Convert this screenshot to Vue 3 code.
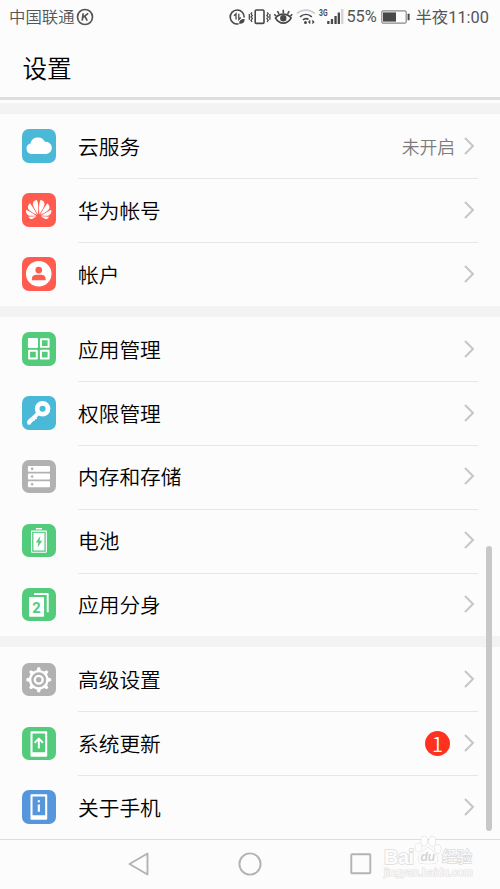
<template>
  <div class="phone">
    <div class="status-bar">
      <span class="carrier">中国联通</span>
      <svg class="k-mark" width="18" height="18" viewBox="0 0 18 18">
        <circle cx="9" cy="9" r="7.5" />
        <path d="M7.2 5.4 6.2 12.6M12.2 5.4 7 9.4M8.8 8.2l2.4 4.4" />
      </svg>
      <div class="status-icons">
        <svg width="132" height="34" viewBox="0 0 132 34">
          <g class="line">
            <path d="M15.200 17.500A7 7 0 1 0 9.500 23.900" />
            <path class="slim" d="M7 19.500v-5.800l-2 2M9.800 13.700v5.800l2-2" />
            <path class="dark slim" d="M10.800 23.200c0-2.400 1.400-3.500 4.200-3.600 0 2.400-1.500 3.600-4.200 3.600z" />
          </g>
          <g class="line">
            <rect x="26.200" y="10" width="8.800" height="13.400" rx="1.200" />
            <path class="slim" d="M23 12.300l-1 1.500 1.300 1.600-1.300 1.600 1.300 1.600-1.300 1.600 1 1.600M20.300 14v5.800M38.200 12.300l1 1.500-1.300 1.600 1.300 1.600-1.300 1.600 1.300 1.600-1 1.600M40.900 14v5.800" />
          </g>
          <g class="line">
            <path d="M46.500 18c4-5.200 11.600-5.200 15.600 0-4 6.800-11.600 6.800-15.600 0z" />
            <circle class="dark" cx="54.300" cy="18.300" r="2.400" />
            <path d="M54.300 13V9.800M50 13.800l-1.600-2.600M58.600 13.800l1.600-2.600M47 16l-1.700-1.800M61.500 16l1.800-1.800" />
          </g>
          <g class="line">
            <path class="faint" d="M68 13.600c5-4.600 12.700-4.600 17.700 0" />
            <path d="M71 16.800c3.600-3.100 8.300-3.100 11.800 0M73.900 19.900c1.500-1.300 4-1.500 5.600-.4" />
            <circle class="dark" cx="76.500" cy="22.400" r=".7" />
            <path class="slim" d="M81.300 20.500l-1.400 1.500 1.400 1.500M83.300 20.500l1.400 1.500-1.400 1.500" />
          </g>
          <text class="net" x="90" y="16" textLength="8.500" lengthAdjust="spacingAndGlyphs">3G</text>
          <g class="bars">
            <rect x="98.200" y="21" width="2.300" height="3" />
            <rect x="101.800" y="19" width="2.300" height="5" />
            <rect x="105.400" y="16" width="2.300" height="8" />
            <rect x="108.700" y="12.500" width="2.300" height="11.500" />
            <rect class="off" x="112.100" y="9" width="2.300" height="15" />
          </g>
        </svg>
      </div>
      <span class="percent">55%</span>
      <svg class="battery" width="29" height="14" viewBox="0 0 29 14">
        <rect class="shell" x=".8" y=".8" width="24.400" height="12.400" rx="1.500" />
        <rect x="2" y="2.400" width="13" height="9.200" />
        <rect x="26.600" y="3.700" width="2" height="6.600" rx=".5" />
      </svg>
      <span class="clock">半夜11:00</span>
    </div>

    <header class="title">设置</header>

    <main class="settings">
      <section v-for="(group, g) in groups" :key="g" class="group">
        <div v-for="item in group" :key="item.label" class="row">
          <svg class="icon" :class="item.color" viewBox="0 0 34 34">
            <path v-if="item.icon === 'cloud'" class="fill" d="M9.500 25.300a5.400 5.400 0 0 1-.9-10.600A7.800 7.800 0 0 1 23.200 13a6.200 6.200 0 0 1 1.800 12.300z" />

            <template v-else-if="item.icon === 'huawei'">
              <path class="fill" transform="translate(4.100 3.900) scale(1.070)" :d="petals" />
              <path class="fill" transform="translate(29.800 3.900) scale(-1.070 1.070)" :d="petals" />
            </template>

            <template v-else-if="item.icon === 'user'">
              <circle class="fill" cx="17" cy="17" r="13" />
              <circle class="tint" cx="17" cy="13.300" r="3.400" />
              <path class="tint" d="M10 23.500v-1.400c0-2.700 2-4 4.500-4h5c2.500 0 4.500 1.300 4.500 4v1.400z" />
            </template>

            <template v-else-if="item.icon === 'apps'">
              <rect class="fill" x="6" y="6" width="10.200" height="10.200" rx="1" />
              <path class="stroke" d="M19.200 7.300h7.800v7.800h-7.800zM7.200 19.100H15v7.800H7.200zM19.200 19.100h7.800v7.800h-7.800z" />
            </template>

            <template v-else-if="item.icon === 'key'">
              <circle class="stroke ring" cx="20.900" cy="12.900" r="5.500" />
              <path class="stroke shaft" d="M16.800 17.200 7.500 26.400" />
              <path class="fill" d="M5 26 8.500 22l6-1 .8 2.300-2 .2-.4 1.700-2-.1-.8 1.900-1 .6-.3 1.300-3.100.2z" />
            </template>

            <template v-else-if="item.icon === 'storage'">
              <template v-for="y in [6, 13.800, 21.600]" :key="y">
                <rect class="fill" x="6" :y="y" width="22.400" height="6" rx=".8" />
                <circle class="tint" cx="10.300" :cy="y + 3" r="1.300" />
              </template>
            </template>

            <template v-else-if="item.icon === 'battery'">
              <rect class="fill" x="14" y="4" width="6.400" height="1.600" rx=".4" />
              <rect class="stroke thin" x="9.700" y="7.200" width="15" height="21.500" rx=".5" />
              <rect class="fill" x="11.600" y="9" width="11.200" height="17.900" />
              <path class="tint" d="M18.600 12.300 14 18.900h2.700L15.900 23.800l4.600-6.700h-2.700z" />
            </template>

            <template v-else-if="item.icon === 'clone'">
              <path class="stroke" d="M12.300 6h13.800v18.500" />
              <rect class="fill" x="7.200" y="9.200" width="15.200" height="20" rx=".8" />
              <text class="two" x="14.800" y="24.900">2</text>
            </template>

            <template v-else-if="item.icon === 'gear'">
              <circle class="stroke heavy" cx="17" cy="17" r="8.800" />
              <circle class="stroke heavy" cx="17" cy="17" r="4" />
              <path v-for="n in 8" :key="n" class="fill" d="M14.500 8.300 15.800 4.400h2.400l1.300 3.900z" :transform="`rotate(${n * 45} 17 17)`" />
            </template>

            <template v-else>
              <path class="fill" fill-rule="evenodd" d="M9.500 4.300h15.200q.9 0 .9.900v24q0 .9-.9.900H9.500q-.9 0-.9-.9v-24q0-.9.900-.9zM10.700 6.500v19.200h12.800V6.500z" />
              <path v-if="item.icon === 'update'" class="stroke" d="M17.100 21.700V12M12.900 16l4.200-4.200 4.200 4.200" />
              <path v-else class="stroke info" d="M17.100 14.800v7.300M17.100 10.500v2" />
            </template>
          </svg>

          <div class="row-body">
            <span class="label">{{ item.label }}</span>
            <span v-if="item.value" class="value">{{ item.value }}</span>
            <span v-if="item.badge" class="badge">{{ item.badge }}</span>
            <svg class="chevron" width="12" height="20" viewBox="0 0 12 20">
              <path d="M2 2l8 8-8 8" />
            </svg>
          </div>
        </div>
      </section>
      <div class="scrollbar"></div>
    </main>

    <nav class="nav-bar">
      <svg width="24" height="26" viewBox="0 0 24 26"><path d="M20.500 2.500v21L2.500 13z" /></svg>
      <svg width="24" height="26" viewBox="0 0 24 26"><circle cx="12" cy="13" r="10.600" /></svg>
      <svg width="24" height="26" viewBox="0 0 24 26"><rect x="2.300" y="3.300" width="19" height="19" rx=".8" /></svg>
    </nav>

    <div class="watermark">
      <div class="brand">
        <span class="bai">Bai</span>
        <svg class="paw" width="28" height="31" viewBox="0 0 28 31">
          <ellipse cx="4.500" cy="12.500" rx="3.200" ry="4.200" />
          <ellipse cx="10.300" cy="6" rx="3.200" ry="4.800" />
          <ellipse cx="18.300" cy="6.200" rx="3.200" ry="4.800" />
          <ellipse cx="23.800" cy="14" rx="3" ry="4.300" />
          <path d="M14 13c3.500 0 5 4 7.500 6.300 3.500 3.300 3 8.700-2 9.200-3.500.3-7.500.3-11 0-5-.5-5.500-6-2-9.200C9 17 10.500 13 14 13z" />
          <text x="6.500" y="26.300">du</text>
        </svg>
        <span class="jy">经验</span>
      </div>
      <div class="site">jingyan.baidu.com</div>
    </div>
  </div>
</template>

<script setup>
// left half of the flower, drawn twice with the second copy mirrored
const petals =
  'M3.670 6.140S1.820 7.910 1.720 9.780v.35c.08 1.510 1.220 2.400 1.220 2.400 1.830 1.790 6.260 4.040 7.300 4.550 0 0 .06.03.1-.01l.02-.04v-.04C7.520 10.800 3.670 6.140 3.670 6.140zM9.650 18.600c-.02-.08-.1-.08-.1-.08l-7.380.26c.8 1.430 2.150 2.530 3.560 2.200.96-.25 3.160-1.780 3.880-2.300.06-.05.04-.09.04-.09zM9.730 17.820C6.490 15.630.21 12.280.21 12.280c-.15.46-.2.9-.21 1.300v.07c0 1.070.4 1.820.4 1.820.8 1.690 2.340 2.200 2.340 2.200.7.3 1.400.31 1.400.31.12.02 4.400 0 5.540 0 .05 0 .08-.05.08-.05v-.06c0-.03-.03-.05-.03-.05zM9.060 3.190a3.420 3.420 0 0 0-2.570 3.150v.41c.03.6.16 1.050.16 1.050.66 2.900 3.860 7.650 4.550 8.650.05.05.1.03.1.03a.1.1 0 0 0 .06-.1c1.060-10.600-1.110-13.420-1.110-13.420-.32.02-1.190.23-1.190.23z';

const groups = [
  [
    { label: '云服务', icon: 'cloud', color: 'blue', value: '未开启' },
    { label: '华为帐号', icon: 'huawei', color: 'red' },
    { label: '帐户', icon: 'user', color: 'red' },
  ],
  [
    { label: '应用管理', icon: 'apps', color: 'green' },
    { label: '权限管理', icon: 'key', color: 'blue' },
    { label: '内存和存储', icon: 'storage', color: 'gray' },
    { label: '电池', icon: 'battery', color: 'green' },
    { label: '应用分身', icon: 'clone', color: 'green' },
  ],
  [
    { label: '高级设置', icon: 'gear', color: 'gray' },
    { label: '系统更新', icon: 'update', color: 'green', badge: 1 },
    { label: '关于手机', icon: 'about', color: 'indigo' },
  ],
];
</script>

<style>
body {
  margin: 0;
}
</style>

<style scoped>
.phone {
  position: relative;
  display: flex;
  flex-direction: column;
  width: 500px;
  height: 889px;
  overflow: hidden;
  background: #fcfcfc;
  color: #000;
  font-family: 'Noto Sans CJK SC', sans-serif;
  font-weight: 350;
}

.status-bar {
  display: flex;
  align-items: center;
  height: 34px;
  padding: 0 11px 0 9px;
  color: #555;
  font-family: Roboto, 'Noto Sans CJK SC', sans-serif;
  font-size: 16.400px;
  font-weight: 400;
  line-height: 34px;
  white-space: nowrap;
}

.carrier,
.clock {
  position: relative;
  top: 1px;
}

.carrier {
  font-weight: 350;
}

.k-mark {
  margin-left: 1px;
  fill: none;
  stroke: #555;
  stroke-width: 1.700;
}

.status-icons {
  width: 117px;
  height: 34px;
  margin-left: auto;
}

.line {
  fill: none;
  stroke: #484848;
  stroke-width: 1.600;
}

.line .slim {
  stroke-width: 1.300;
}

.line .dark {
  fill: #484848;
}

.line .faint {
  stroke: #ccc;
}

.net {
  fill: #484848;
  font: bold 9.500px Roboto, sans-serif;
}

.bars {
  fill: #484848;
}

.bars .off {
  fill: #d4d4d4;
}

.percent {
  width: 35px;
}

.battery {
  flex-shrink: 0;
  fill: #484848;
}

.battery .shell {
  fill: none;
  stroke: #888;
  stroke-width: 1.200;
}

.clock {
  margin-left: 5px;
}

.title {
  height: 63px;
  padding-left: 22.500px;
  border-bottom: 3px solid #dedede;
  font-size: 24.600px;
  line-height: 66px;
}

.settings {
  position: relative;
  padding-top: 3px;
}

.group {
  border-top: 11px solid #f3f3f3;
}

.row {
  display: flex;
  align-items: center;
  height: 64px;
  padding: 0 22px;
}

.group + .group .row {
  height: 63.900px;
}

.icon {
  flex-shrink: 0;
  width: 33.500px;
  height: 33.500px;
  border-radius: 7px;
}

.blue {
  background: #49b9d7;
  --tint: #49b9d7;
}

.red {
  background: #ff5b4f;
  --tint: #ff5b4f;
}

.green {
  background: #52cb7b;
  --tint: #52cb7b;
}

.gray {
  background: #b1b1b1;
  --tint: #b1b1b1;
}

.indigo {
  background: #5596dc;
  --tint: #5596dc;
}

.fill {
  fill: #fff;
}

.tint {
  fill: var(--tint);
}

.stroke {
  fill: none;
  stroke: #fff;
  stroke-width: 2;
  stroke-linejoin: round;
}

.ring {
  stroke-width: 4.800;
}

.shaft {
  stroke-width: 4;
}

.heavy {
  stroke-width: 2.400;
}

.thin {
  stroke-width: 1.200;
}

.info {
  stroke-width: 2.200;
}

.two {
  fill: var(--tint);
  font: bold 15px Roboto, sans-serif;
  text-anchor: middle;
}

.row-body {
  display: flex;
  flex: 1;
  align-items: center;
  box-sizing: border-box;
  height: 100%;
  margin-left: 22.500px;
  padding-right: 3px;
}

/* the bottom padding keeps the content centred under the divider */
.row + .row .row-body {
  padding-bottom: 1.500px;
  border-top: 1px solid #e6e6e6;
}

.label {
  flex: 1;
  font-size: 20.700px;
  line-height: 30px;
}

.value {
  color: #7c7c7c;
  font-size: 17.800px;
}

.badge {
  width: 25px;
  height: 25px;
  margin-right: 5px;
  border-radius: 50%;
  background: #ff321f;
  color: #fff;
  font: 350 20px/26px 'Noto Sans CJK SC', sans-serif;
  text-align: center;
}

.chevron {
  margin-left: 8px;
  fill: none;
  stroke: #c6c6c6;
  stroke-width: 2;
}

.scrollbar {
  position: absolute;
  right: 8px;
  bottom: 8px;
  width: 6px;
  height: 285px;
  border-radius: 3px;
  background: #c8c8c8;
}

.nav-bar {
  display: flex;
  flex: 1;
  align-items: center;
  justify-content: center;
  gap: 87px;
  padding-bottom: 2px;
  border-top: 1px solid #dedede;
}

.nav-bar svg {
  fill: none;
  stroke: #b3b3b3;
  stroke-width: 1.900;
  stroke-linejoin: round;
}

.watermark {
  position: absolute;
  left: 384px;
  top: 835px;
  width: 92px;
  color: #fcfcfc;
  font-family: 'Liberation Sans', 'Noto Sans CJK SC', sans-serif;
  font-weight: 400;
  paint-order: stroke fill;
  -webkit-text-stroke: 1.600px #dcdcdc;
}

.brand {
  display: flex;
  height: 31px;
}

.bai {
  width: 30px;
  font-size: 20px;
  font-weight: bold;
  line-height: 45px;
  letter-spacing: -0.5px;
}

.paw {
  flex-shrink: 0;
  fill: #fdfdfd;
  stroke: #d9d9d9;
}

.paw text {
  font: bold italic 12px 'Liberation Sans', sans-serif;
  fill: #d4d4d4;
  stroke: none;
  -webkit-text-stroke: 0;
}

.jy {
  font-size: 15px;
  line-height: 43px;
  white-space: nowrap;
}

.site {
  font-size: 11px;
  line-height: 13px;
  -webkit-text-stroke: 1.200px #e2e2e2;
}
</style>
